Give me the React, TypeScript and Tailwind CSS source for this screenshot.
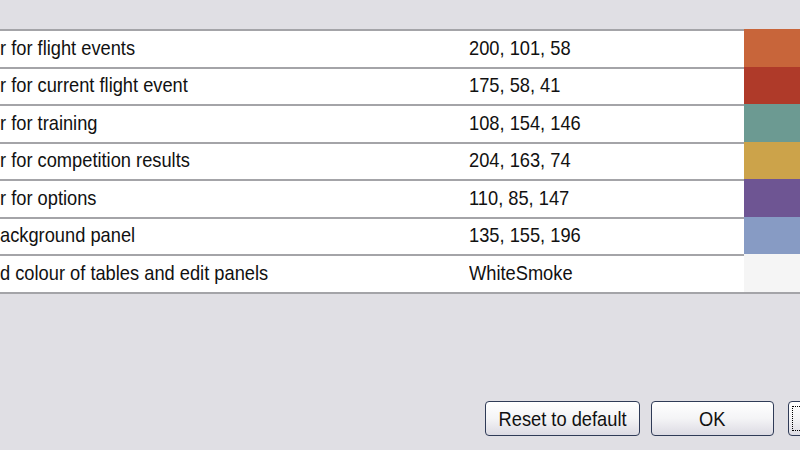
import React from "react";

interface ColourRow {
  label: string;
  value: string;
  swatch: string;
}

const rows: ColourRow[] = [
  { label: "r for flight events", value: "200, 101, 58", swatch: "bg-[#c8653a]" },
  { label: "r for current flight event", value: "175, 58, 41", swatch: "bg-[#af3a29]" },
  { label: "r for training", value: "108, 154, 146", swatch: "bg-[#6c9a92]" },
  { label: "r for competition results", value: "204, 163, 74", swatch: "bg-[#cca34a]" },
  { label: "r for options", value: "110, 85, 147", swatch: "bg-[#6e5593]" },
  { label: "ackground panel", value: "135, 155, 196", swatch: "bg-[#879bc4]" },
  { label: "d colour of tables and edit panels", value: "WhiteSmoke", swatch: "bg-[#f5f5f5]" },
];

function Txt({ children, center }: { children: React.ReactNode; center?: boolean }) {
  return (
    <span
      className={
        "inline-block whitespace-nowrap text-[21px] leading-none text-[#111] scale-x-[0.87] " +
        (center ? "origin-center" : "origin-left")
      }
    >
      {children}
    </span>
  );
}

function XpButton({ label, width, focused }: { label?: string; width: string; focused?: boolean }) {
  return (
    <div
      className={
        "shrink-0 h-[35px] rounded-[4px] border border-[#2f3b57] bg-gradient-to-b from-white via-[#f4f4f6] to-[#dcdbe3] flex items-center " +
        (focused ? "justify-start pl-[3px] " : "justify-center ") +
        width
      }
    >
      {focused ? (
        <div className="w-[calc(100%-8px)] h-[calc(100%-8px)] border border-dotted border-black" />
      ) : (
        <Txt center>{label}</Txt>
      )}
    </div>
  );
}

export default function App() {
  return (
    <div
      className="w-[800px] h-[450px] bg-[#e0dfe4] overflow-hidden flex flex-col"
      style={{ fontFamily: '"Liberation Sans", Arial, sans-serif' }}
    >
      <div className="h-[29px] shrink-0" />
      <div className="border-b-2 border-[#a4a4a8]">
        {rows.map((r) => (
          <div key={r.label} className="flex h-[37.5px]">
            <div className="flex-1 bg-white border-t-2 border-[#a4a4a8] flex items-center pt-[1px]">
              <div className="w-[469px] shrink-0">
                <Txt>{r.label}</Txt>
              </div>
              <div className="flex-1">
                <Txt>{r.value}</Txt>
              </div>
            </div>
            <div className={"w-[56px] shrink-0 " + r.swatch} />
          </div>
        ))}
      </div>
      <div className="mt-[107px] flex items-center pl-[485px] gap-[11px]">
        <XpButton label="Reset to default" width="w-[155px]" />
        <XpButton label="OK" width="w-[123px]" />
        <div className="ml-[3px] shrink-0 flex">
          <XpButton width="w-[123px]" focused />
        </div>
      </div>
    </div>
  );
}
